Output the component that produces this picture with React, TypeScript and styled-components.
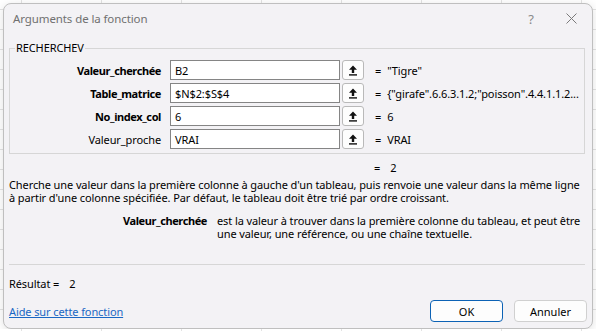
import styled, { createGlobalStyle } from 'styled-components';

const GlobalStyle = createGlobalStyle`
  html, body {
    margin: 0;
    padding: 0;
  }
  body {
    background-color: #fff;
    background-image:
      repeating-linear-gradient(90deg, transparent 0 21px, #e3e3e3 21px 22px, transparent 22px 80px),
      repeating-linear-gradient(0deg, transparent 0 19px, #e3e3e3 19px 20px);
    font-family: "Noto Sans", "Open Sans", sans-serif;
    font-size: 11px;
    letter-spacing: -0.1px;
    color: #000;
  }
  b {
    letter-spacing: -0.4px;
  }
`

const Dialog = styled.div`
  margin: 3px 0 0 3px;
  width: 588px;
  height: 324px;
  border: 1px solid #bfbfbf;
  border-radius: 8px;
  background: #f3f2f5;
  box-shadow: 0 2px 10px rgba(0, 0, 0, 0.12);
  display: flex;
  flex-direction: column;
  overflow: hidden;
`

const TitleBar = styled.div`
  height: 29px;
  display: flex;
  align-items: center;
  padding-left: 9px;
  color: #707070;
  font-size: 11.5px;

  span {
    flex: 1;
  }
`

const TitleIcon = styled.div`
  width: 20px;
  display: flex;
  justify-content: center;
  color: #8a8a8a;
  font-size: 13px;
  margin-right: ${p => p.$gap}px;
`

const Content = styled.div`
  flex: 1;
  display: flex;
  flex-direction: column;
  padding: 0 5px 6px 5px;
`

const GroupBox = styled.fieldset`
  margin: 8px 2px 0 0;
  padding: 5px 0 4px;
  border: 1px solid #d6d6d6;
  min-width: 0;

  legend {
    margin-left: 5px;
    padding: 0 1px;
    line-height: 14px;
  }
`

const ArgRow = styled.div`
  display: flex;
  align-items: center;
  height: 20px;
  & + & {
    margin-top: 3px;
  }
`

const ArgLabel = styled.label`
  width: 151px;
  margin-right: 9px;
  text-align: right;
  font-weight: ${p => (p.$required ? 700 : 400)};
  letter-spacing: ${p => (p.$required ? '-0.4px' : '-0.1px')};
  white-space: nowrap;
`

const ArgInput = styled.div`
  width: 164px;
  height: 18px;
  border: 1px solid #858585;
  background: #fff;
  padding-left: 4px;
  display: flex;
  align-items: center;
  margin-right: 2px;
`

const RefButton = styled.button`
  width: 22px;
  height: 20px;
  padding: 0;
  border: 1px solid #b9b9b9;
  border-radius: 3px;
  background: #fdfdfd;
  display: flex;
  align-items: center;
  justify-content: center;
`

const Evaluated = styled.div`
  margin-left: 11px;
  display: flex;
  gap: 6px;
  white-space: nowrap;
  overflow: hidden;
  flex: 1;
  padding-right: 4px;
`

const FormulaResult = styled.div`
  margin-top: 7px;
  padding-left: 365px;
  line-height: 14px;
  display: flex;
  gap: 10px;
`

const Description = styled.p`
  margin: 3px 2px 0 0;
  line-height: 13px;
`

const ArgHelp = styled.div`
  margin: 10px 2px 0 0;
  display: grid;
  grid-template-columns: 198px 1fr;
  column-gap: 10px;
  line-height: 13px;

  b {
    text-align: right;
  }
`

const Separator = styled.hr`
  margin: auto 2px 0 0;
  border: none;
  border-top: 1px solid #d6d6d6;
`

const ResultLine = styled.div`
  margin: 12px 0 0;
  line-height: 14px;
  display: flex;
  gap: 10px;
`

const Footer = styled.div`
  margin-top: 9px;
  display: flex;
  align-items: center;
`

const HelpLink = styled.a`
  flex: 1;
  color: #1a67c4;
  text-decoration: underline;
`

const Button = styled.button`
  width: 73px;
  height: 22px;
  margin-left: ${p => p.$gap}px;
  border: 1px solid ${p => (p.$primary ? '#0c62b5' : '#d0d0d0')};
  border-radius: 4px;
  background: #fdfdfd;
  font: inherit;
  color: #000;
  padding: 0;
`

const args = [
  { name: 'Valeur_cherchée', value: 'B2', result: '"Tigre"', required: true },
  { name: 'Table_matrice', value: '$N$2:$S$4', result: '{"girafe".6.6.3.1.2;"poisson".4.4.1.1.2...', required: true },
  { name: 'No_index_col', value: '6', result: '6', required: true },
  { name: 'Valeur_proche', value: 'VRAI', result: 'VRAI', required: false },
];

const RefIcon = () => (
  <svg width="10" height="11" viewBox="0 0 10 11">
    <path d="M5 0.5 L9 4.8 H6.2 V8 H3.8 V4.8 H1 Z" fill="#111" />
    <rect x="1" y="9.2" width="8" height="1.4" fill="#111" />
  </svg>
);

export default function App() {
  return (
    <>
      <GlobalStyle />
      <Dialog>
        <TitleBar>
          <span>Arguments de la fonction</span>
          <TitleIcon $gap={20}>?</TitleIcon>
          <TitleIcon $gap={11}>
            <svg width="11" height="11" viewBox="0 0 11 11">
              <path d="M0.5 0.5 L10.5 10.5 M10.5 0.5 L0.5 10.5" stroke="#7a7a7a" strokeWidth="1" />
            </svg>
          </TitleIcon>
        </TitleBar>
        <Content>
          <GroupBox>
            <legend>RECHERCHEV</legend>
            {args.map(a => (
              <ArgRow key={a.name}>
                <ArgLabel $required={a.required}>{a.name}</ArgLabel>
                <ArgInput>{a.value}</ArgInput>
                <RefButton><RefIcon /></RefButton>
                <Evaluated>
                  <span>=</span>
                  <span>{a.result}</span>
                </Evaluated>
              </ArgRow>
            ))}
          </GroupBox>
          <FormulaResult>
            <span>=</span>
            <span>2</span>
          </FormulaResult>
          <Description>
            Cherche une valeur dans la première colonne à gauche d'un tableau, puis renvoie une valeur dans la même ligne
            à partir d'une colonne spécifiée. Par défaut, le tableau doit être trié par ordre croissant.
          </Description>
          <ArgHelp>
            <b>Valeur_cherchée</b>
            <span>est la valeur à trouver dans la première colonne du tableau, et peut être une valeur, une référence, ou une chaîne textuelle.</span>
          </ArgHelp>
          <Separator />
          <ResultLine>
            <span>Résultat =</span>
            <span>2</span>
          </ResultLine>
          <Footer>
            <HelpLink href="#">Aide sur cette fonction</HelpLink>
            <Button $primary $gap={0}>OK</Button>
            <Button $gap={11}>Annuler</Button>
          </Footer>
        </Content>
      </Dialog>
    </>
  );
}
